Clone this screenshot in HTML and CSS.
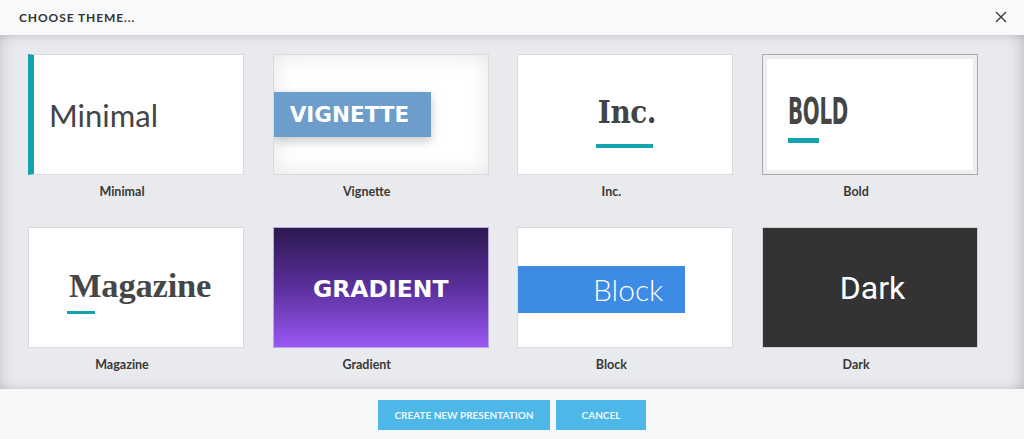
FILE: index.html
```html
<!DOCTYPE html>
<html lang="en">
<head>
<meta charset="utf-8">
<title>Choose theme</title>
<link rel="stylesheet" href="styles.css">
</head>
<body>
<div class="dialog">
  <header class="dlg-header">
    <h1 class="dlg-title">CHOOSE THEME...</h1>
    <button class="close" aria-label="Close">
      <svg width="12" height="12" viewBox="0 0 12 12"><path d="M1 1L11 11M11 1L1 11" stroke="#3a3a3a" stroke-width="1.4" fill="none"/></svg>
    </button>
  </header>
  <main class="dlg-body">
    <div class="grid">
      <div class="theme">
        <div class="card minimal"><span class="minimal-text">Minimal</span></div>
        <div class="label">Minimal</div>
      </div>
      <div class="theme">
        <div class="card vignette"><div class="vig-box">VIGNETTE</div></div>
        <div class="label">Vignette</div>
      </div>
      <div class="theme">
        <div class="card inc"><span class="inc-text">Inc.</span><span class="inc-bar"></span></div>
        <div class="label">Inc.</div>
      </div>
      <div class="theme">
        <div class="card bold"><div class="bold-inner"><span class="bold-text">BOLD</span><span class="bold-bar"></span></div></div>
        <div class="label">Bold</div>
      </div>
      <div class="theme">
        <div class="card magazine"><span class="mag-text">Magazine</span><span class="mag-bar"></span></div>
        <div class="label">Magazine</div>
      </div>
      <div class="theme">
        <div class="card gradient"><span class="grad-text">GRADIENT</span></div>
        <div class="label">Gradient</div>
      </div>
      <div class="theme">
        <div class="card block"><div class="block-box">Block</div></div>
        <div class="label">Block</div>
      </div>
      <div class="theme">
        <div class="card dark"><span class="dark-text">Dark</span></div>
        <div class="label">Dark</div>
      </div>
    </div>
  </main>
  <footer class="dlg-footer">
    <button class="btn btn-create">CREATE NEW PRESENTATION</button>
    <button class="btn btn-cancel">CANCEL</button>
  </footer>
</div>
</body>
</html>
```

FILE: styles.css
```css
* { box-sizing: border-box; }
html, body { margin: 0; padding: 0; }
body {
  width: 1024px;
  height: 439px;
  overflow: hidden;
  font-family: Lato, "Open Sans", "Liberation Sans", sans-serif;
  color: #333;
  background: #f6f7f9;
}
.dialog { display: flex; flex-direction: column; height: 439px; }

.dlg-header {
  height: 35px;
  background: #f8f9fb;
  display: flex;
  align-items: center;
  justify-content: space-between;
  padding: 0 17px 0 19px;
}
.dlg-title {
  margin: 0;
  font-size: 12px;
  font-weight: 700;
  letter-spacing: 0.9px;
  color: #333;
}
.close {
  border: 0;
  background: none;
  padding: 0;
  width: 12px;
  height: 12px;
  display: flex;
  margin-top: -1px;
}

.dlg-body {
  height: 354px;
  background: #e9eaed;
  padding: 19px 0 0 28px;
  box-shadow:
    inset 0 8px 10px -6px rgba(0,0,0,0.13),
    inset 14px 0 14px -10px rgba(0,0,0,0.10),
    inset -14px 0 12px -8px rgba(0,0,0,0.12),
    inset 0 -8px 10px -6px rgba(0,0,0,0.10);
}
.grid {
  display: grid;
  grid-template-columns: repeat(4, 216px);
  column-gap: 28.7px;
  row-gap: 28px;
}
.theme { display: flex; flex-direction: column; align-items: center; }
.card {
  width: 216px;
  height: 121px;
  background: #fff;
  border: 1px solid #d9dadd;
  overflow: hidden;
  display: flex;
}
.label {
  margin-top: 9px;
  margin-right: 28px;
  height: 16px;
  line-height: 16px;
  font-size: 12.5px;
  font-weight: 700;
  color: #383838;
  margin-bottom: -1px;
}

/* Minimal */
.minimal {
  border-left: 6px solid #13a2b0;
  align-items: center;
  padding-left: 15px;
}
.minimal-text {
  font-family: Lato, sans-serif;
  font-size: 31px;
  color: #454545;
  margin-top: 0;
}

/* Vignette */
.vignette {
  align-items: center;
  box-shadow: inset 0 0 22px rgba(0,0,0,0.10);
}
.vig-box {
  width: 157px;
  height: 45px;
  background: #6c9dcb;
  color: #fff;
  font-family: "DejaVu Sans", sans-serif;
  font-weight: 700;
  font-size: 21.5px;
  line-height: 45px;
  padding-left: 16px;
  box-shadow: 0 4px 10px rgba(0,0,0,0.22);
}

/* Inc */
.inc {
  flex-direction: column;
  align-items: center;
  justify-content: center;
  padding-left: 3px;
  padding-top: 12px;
}
.inc-text {
  font-family: "DejaVu Serif Condensed", "DejaVu Serif", serif;
  font-weight: 700;
  font-size: 31px;
  color: #444;
  letter-spacing: -0.5px;
  line-height: 36px;
}
.inc-bar {
  width: 57px;
  height: 4px;
  background: #13a2b0;
  margin-top: 14px;
  margin-left: -5px;
}

/* Bold */
.bold {
  border: 1px solid #a8a9ab;
  padding: 4px;
  background: #eeeeef;
}
.bold-inner {
  flex: 1;
  background: #fff;
  display: flex;
  flex-direction: column;
  justify-content: center;
  align-items: flex-start;
  padding-left: 21px;
  padding-top: 7px;
}
.bold-text {
  font-family: "DejaVu Sans Condensed", "DejaVu Sans", sans-serif;
  font-weight: 700;
  font-size: 38px;
  line-height: 36px;
  color: #454545;
  display: inline-block;
  transform: scaleX(0.58);
  transform-origin: left center;
  letter-spacing: -0.5px;
}
.bold-bar {
  width: 31px;
  height: 5px;
  background: #13a2b0;
  margin-top: 9px;
}

/* Magazine */
.magazine {
  flex-direction: column;
  justify-content: center;
  align-items: flex-start;
  padding-left: 38px;
  padding-top: 6px;
}
.mag-text {
  font-family: "Liberation Serif", serif;
  font-weight: 700;
  font-size: 34.5px;
  line-height: 36px;
  color: #464646;
  margin-left: 2px;
  letter-spacing: -0.2px;
}
.mag-bar {
  width: 28px;
  height: 3px;
  background: #13a2b0;
  margin-top: 8px;
}

/* Gradient */
.gradient {
  border-color: #b9a6e0;
  background: linear-gradient(to bottom, #2d1950 0%, #5a2f9c 50%, #9a58f4 100%);
  align-items: center;
  justify-content: center;
}
.grad-text {
  font-family: "DejaVu Sans", sans-serif;
  font-weight: 700;
  font-size: 23.5px;
  color: #fff;
  margin-top: 2px;
}

/* Block */
.block { align-items: center; padding-top: 4px; }
.block-box {
  width: 167px;
  height: 47px;
  background: #3d8be5;
  color: #fff;
  font-family: Lato, sans-serif;
  font-weight: 300;
  font-size: 30px;
  line-height: 47px;
  text-align: right;
  padding-right: 22px;
}

/* Dark */
.dark {
  background: #333333;
  border-color: #cfd0d2;
  align-items: center;
  justify-content: center;
}
.dark-text {
  font-family: Roboto, sans-serif;
  font-size: 32px;
  color: #fff;
  margin-left: 5px;
}

/* Footer */
.dlg-footer {
  flex: 1;
  background: #f6f7f9;
  display: flex;
  justify-content: center;
  align-items: flex-start;
  gap: 6px;
  padding-top: 11px;
}
.btn {
  height: 30px;
  border: 0;
  background: #4db7e7;
  color: #eef8fd;
  font-family: Lato, sans-serif;
  font-weight: 700;
  font-size: 10px;
  padding: 0;
  cursor: pointer;
}
.btn-create { width: 172px; }
.btn-cancel { width: 90px; }
```
